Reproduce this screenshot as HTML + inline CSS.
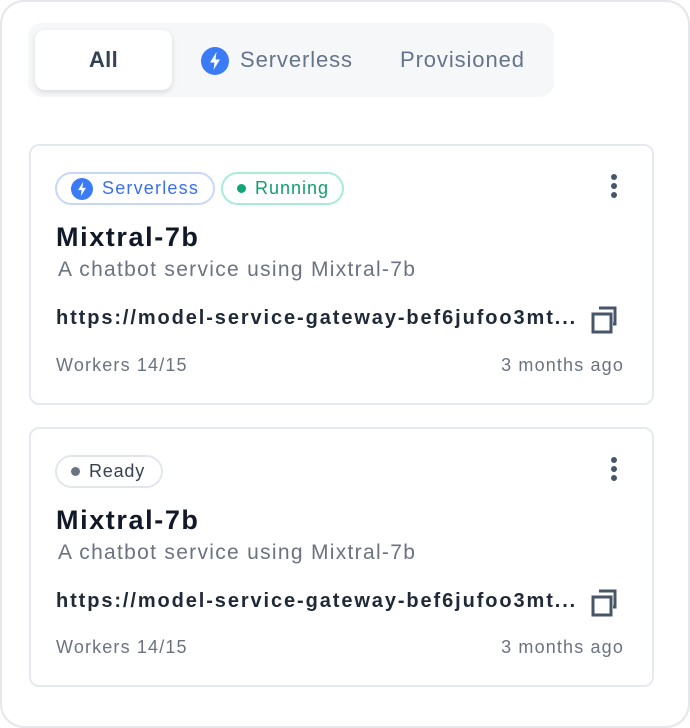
<!DOCTYPE html>
<html><head><meta charset="utf-8"><style>
*{box-sizing:border-box;margin:0;padding:0}
body{width:690px;height:728px;background:#fff;font-family:"Liberation Sans",Arial,sans-serif;position:relative;overflow:hidden}
.outer{position:absolute;left:0;top:0;width:690px;height:728px;border:2px solid #e5e7eb;border-radius:24px}
.tabs{position:absolute;left:28px;top:23px;width:526px;height:74px;background:#f6f7f9;border-radius:14px}
.tab{position:absolute;top:30px;height:60px;line-height:60px;font-size:22px;color:#64748b;letter-spacing:0.9px}
.all{left:35px;width:137px;background:#fff;border-radius:10px;box-shadow:0 2px 6px rgba(0,0,0,.12);text-align:center;font-weight:bold;color:#334155;letter-spacing:0.3px}
.card{position:absolute;left:29px;width:625px;border:2px solid #e5e9f0;border-radius:10px}
.badge{position:absolute;top:26px;height:33px;border-radius:17px;font-size:18px;line-height:29px;border:2px solid}
.title{position:absolute;left:25px;font-size:27px;font-weight:bold;color:#111827;letter-spacing:1.6px}
.sub{position:absolute;left:27px;font-size:21px;color:#6b7280;letter-spacing:1.3px}
.url{position:absolute;left:25px;font-size:20px;font-weight:bold;color:#1f2937;letter-spacing:1.9px}
.foot{position:absolute;font-size:18px;color:#6b7280;letter-spacing:1.15px}
.dots{position:absolute;left:580px;width:6px}
.dots i{display:block;width:6px;height:6px;border-radius:3px;background:#475569;margin-bottom:3px}
</style></head><body>
<div class="outer"></div>
<div class="tabs"></div>
<div class="tab all">All</div>
<div class="tab" style="left:201px"><svg width="28" height="28" viewBox="0 0 28 28" style="position:absolute;left:0;top:17px"><circle cx="14" cy="14" r="14" fill="#3b7cf6"/><path d="M15.5 5 L9 15.5 H13.5 L12.5 23 L19 12.5 H14.5 Z" fill="#fff"/></svg><span style="margin-left:39px">Serverless</span></div>
<div class="tab" style="left:400px">Provisioned</div>

<div class="card" style="top:144px;height:261px">
 <div class="badge" style="left:24px;width:160px;border-color:#c7d7fb;color:#3b6ff0"><svg width="22" height="22" viewBox="0 0 28 28" style="position:absolute;left:14px;top:4px"><circle cx="14" cy="14" r="14" fill="#3b7cf6"/><path d="M15.5 5 L9 15.5 H13.5 L12.5 23 L19 12.5 H14.5 Z" fill="#fff"/></svg><span style="position:absolute;left:45px;letter-spacing:1.2px">Serverless</span></div>
 <div class="badge" style="left:190px;width:123px;border-color:#a7ecd3;color:#0f9f6e"><i style="position:absolute;left:14px;top:10px;width:9px;height:9px;border-radius:5px;background:#10a674"></i><span style="position:absolute;left:32px;letter-spacing:1px">Running</span></div>
 <div class="dots" style="top:28px"><i></i><i></i><i></i></div>
 <div class="title" style="top:76px">Mixtral-7b</div>
 <div class="sub" style="top:112px">A chatbot service using Mixtral-7b</div>
 <div class="url" style="top:161px">https://model-service-gateway-bef6jufoo3mt...</div>
 <svg width="30" height="32" viewBox="0 0 30 32" style="position:absolute;left:559px;top:157px"><rect x="3" y="11" width="18" height="18" fill="none" stroke="#475569" stroke-width="3"/><path d="M9 5 H25 V21 H23" fill="none" stroke="#475569" stroke-width="3"/></svg>
 <div class="foot" style="left:25px;top:209px">Workers 14/15</div>
 <div class="foot" style="right:28px;top:209px">3 months ago</div>
</div>

<div class="card" style="top:427px;height:260px">
 <div class="badge" style="left:24px;width:108px;border-color:#e2e6ec;color:#374151"><i style="position:absolute;left:14px;top:10px;width:9px;height:9px;border-radius:5px;background:#6b7280"></i><span style="position:absolute;left:32px;letter-spacing:0.8px">Ready</span></div>
 <div class="dots" style="top:28px"><i></i><i></i><i></i></div>
 <div class="title" style="top:76px">Mixtral-7b</div>
 <div class="sub" style="top:112px">A chatbot service using Mixtral-7b</div>
 <div class="url" style="top:161px">https://model-service-gateway-bef6jufoo3mt...</div>
 <svg width="30" height="32" viewBox="0 0 30 32" style="position:absolute;left:559px;top:157px"><rect x="3" y="11" width="18" height="18" fill="none" stroke="#475569" stroke-width="3"/><path d="M9 5 H25 V21 H23" fill="none" stroke="#475569" stroke-width="3"/></svg>
 <div class="foot" style="left:25px;top:208px">Workers 14/15</div>
 <div class="foot" style="right:28px;top:208px">3 months ago</div>
</div>
</body></html>
